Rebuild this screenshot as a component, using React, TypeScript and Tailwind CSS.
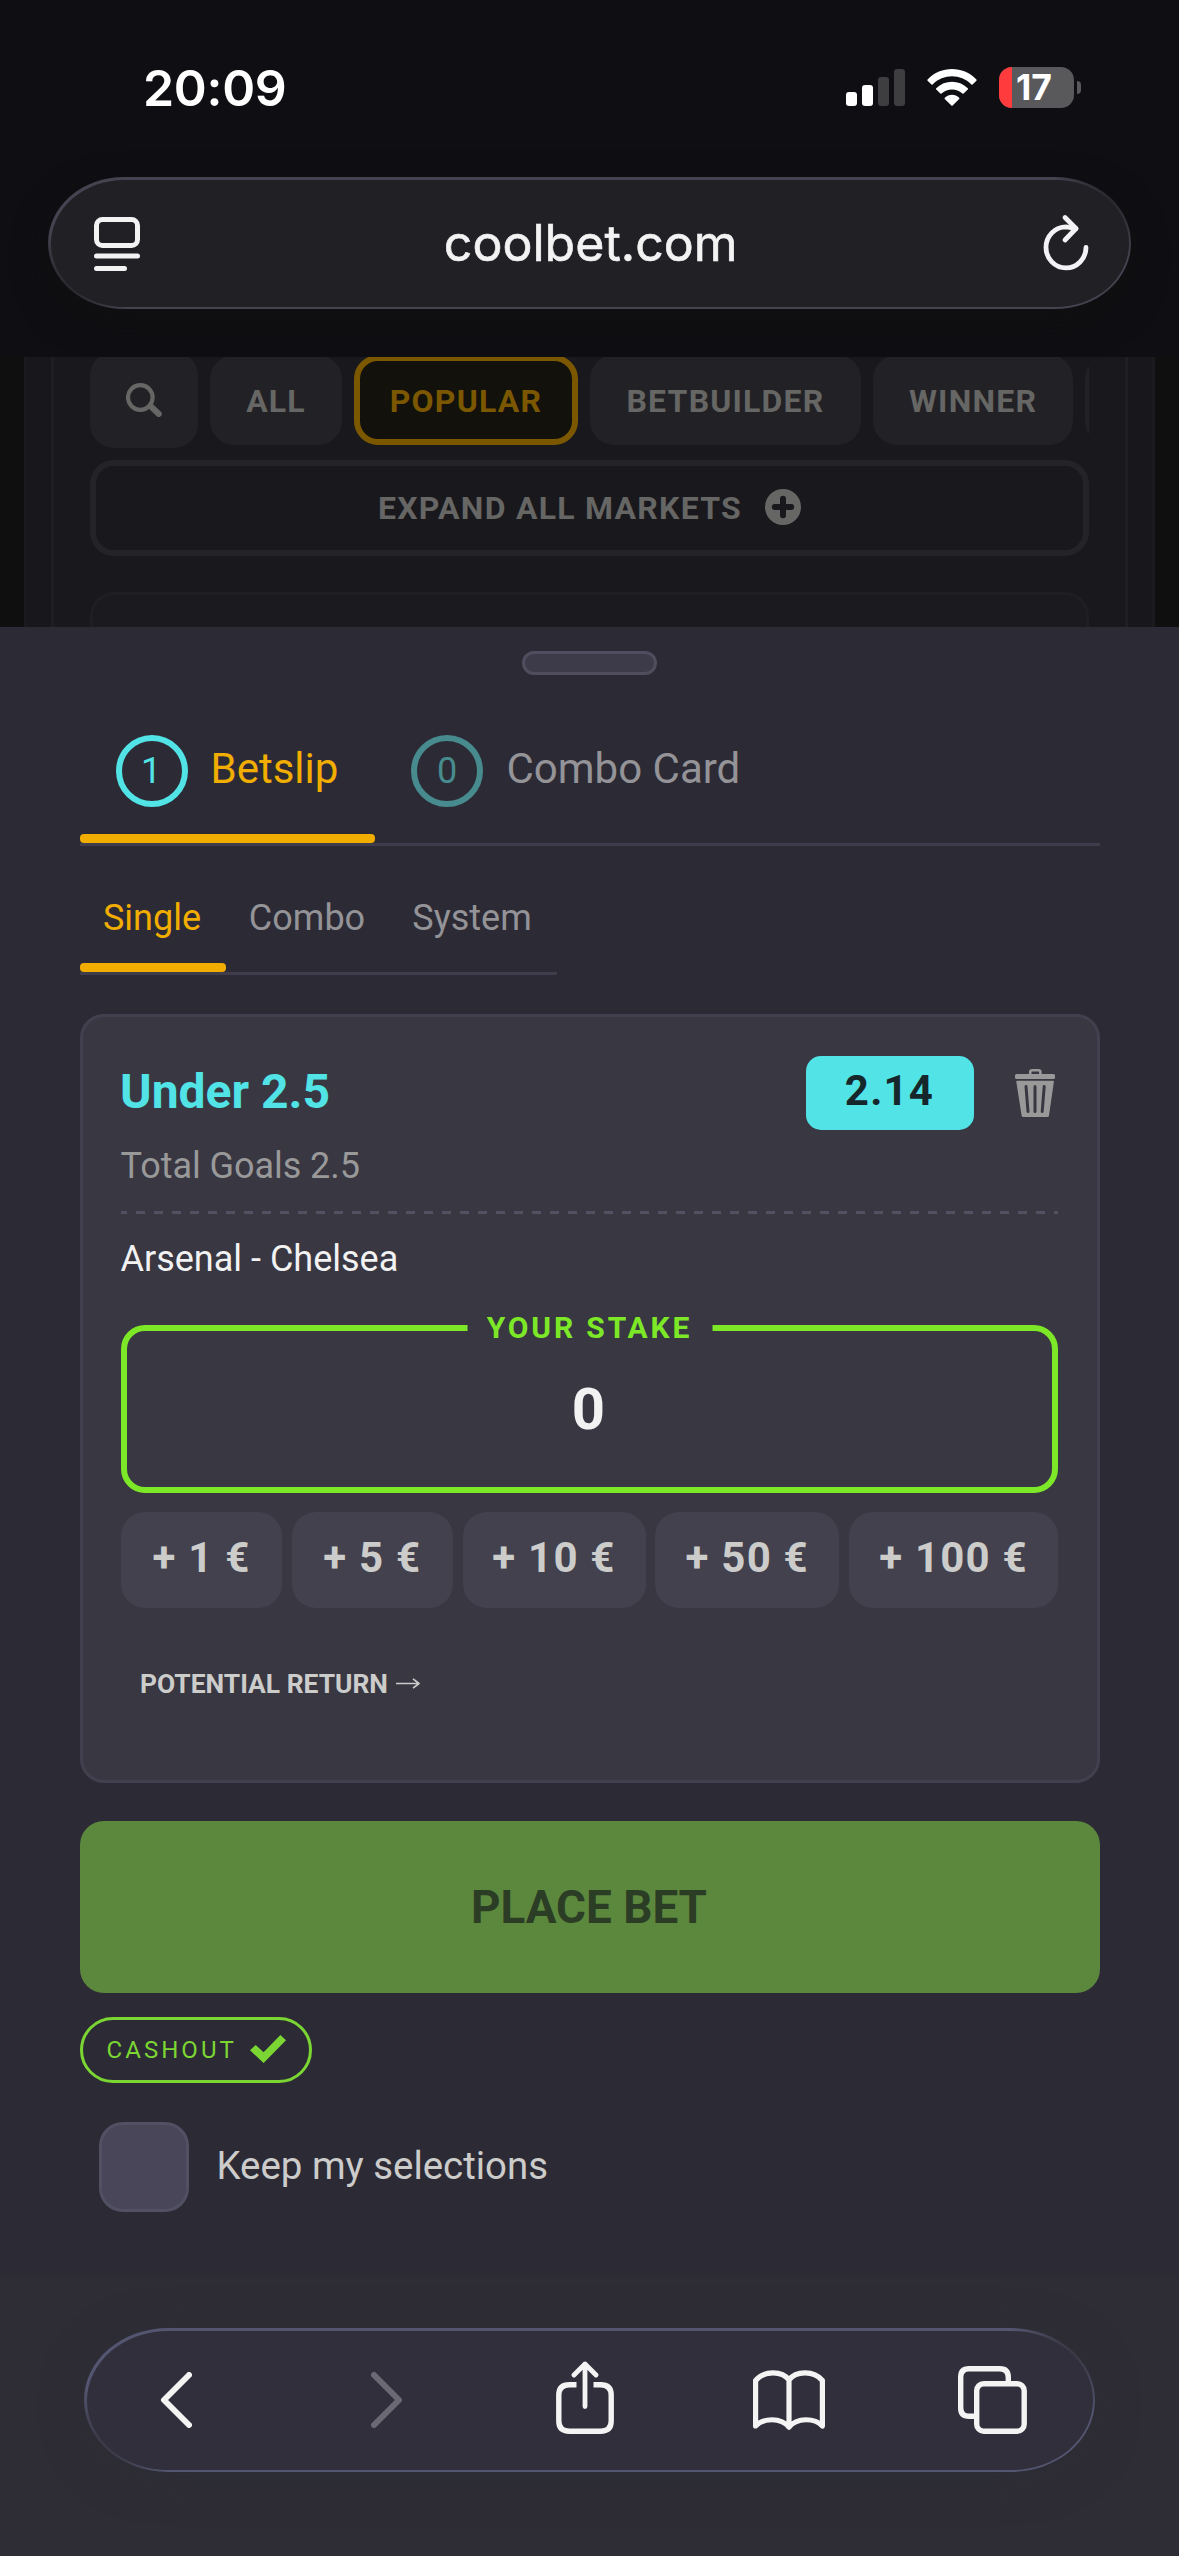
import React from "react";

const marketChips = [
  { label: "ALL", box: "w-[132px]" },
  { label: "POPULAR", box: "w-[224px]", active: true },
  { label: "BETBUILDER", box: "w-[271px]" },
  { label: "WINNER", box: "w-[200px]" },
  { label: "", box: "w-[200px]" },
];

const stakeChips = [
  { label: "+ 1 €", box: "w-[161px]" },
  { label: "+ 5 €", box: "w-[161px]" },
  { label: "+ 10 €", box: "w-[183px]" },
  { label: "+ 50 €", box: "w-[184px]" },
  { label: "+ 100 €", box: "w-[209px]" },
];

function WifiIcon() {
  return (
    <svg width="50" height="37" viewBox="0 0 50 37" fill="#fff">
      <path d="M.6 10.4C14-3.4 36-3.4 49.4 10.4Q50 11 49.4 11.8L45.5 15.6Q45 16 44.4 15.5C33.5 4.6 16.5 4.6 5.6 15.5Q5 16 4.5 15.6L.6 11.8Q0 11 .6 10.4Z" />
      <path d="M9.2 19.2C18 10.6 32 10.6 40.8 19.2Q41.3 19.8 40.8 20.4L36.6 24.6Q36 25 35.4 24.5C29.5 19.3 20.5 19.3 14.6 24.5Q14 25 13.4 24.6L9.2 20.4Q8.7 19.8 9.2 19.2Z" />
      <path d="M17.8 28.8C21.8 24.7 28.2 24.7 32.2 28.8Q32.8 29.4 32.2 30L25.6 36.6Q25 37 24.4 36.6L17.8 30Q17.2 29.4 17.8 28.8Z" />
    </svg>
  );
}

function StatusBar() {
  return (
    <div className="flex h-[177px] items-center justify-between pr-[98px] pl-[143px] font-[Inter,sans-serif]">
      <div className="mt-[-2px] text-[50px] leading-none font-semibold tracking-[-0.3px] text-white">20:09</div>
      <div className="mt-[-2px] flex items-center">
        <div className="flex h-[37px] items-end gap-[5.5px]">
          <div className="h-[14px] w-[10.5px] rounded-[3px] bg-white" />
          <div className="h-[21px] w-[10.5px] rounded-[3px] bg-white" />
          <div className="h-[29px] w-[10.5px] rounded-[3px] bg-[#3e3e41]" />
          <div className="h-[37px] w-[10.5px] rounded-[3px] bg-[#3e3e41]" />
        </div>
        <div className="ml-[22px]">
          <WifiIcon />
        </div>
        <div className="ml-[22.5px] flex h-[41px] w-[75px] items-center overflow-hidden rounded-[13px] bg-[#59595b]">
          <div className="h-full w-[13px] bg-[#ff3b3e]" />
          <div className="ml-[4px] text-[35.5px] leading-none font-bold text-white">17</div>
        </div>
        <div className="ml-[3px] h-[13px] w-[4px] rounded-r-full bg-[#59595b]" />
      </div>
    </div>
  );
}

function AddressBar() {
  return (
    <div className="mx-[48px] h-[132px] rounded-[76px/66px] bg-[#45434f] bg-[radial-gradient(circle_at_100%_0,#28272d_25px,transparent_80px),radial-gradient(circle_at_0_100%,#28272d_25px,transparent_80px)] p-[2.5px] font-[Inter,sans-serif] shadow-[0_14px_34px_rgba(17,17,17,0.6)]">
      <div className="flex h-full items-center justify-between rounded-[74px/64px] bg-[#212025] pr-[40px] pl-[43.5px]">
        <svg className="mt-[2px]" width="46" height="54" viewBox="0 0 46 54" fill="none" stroke="#f3f3f4" strokeWidth="5" strokeLinecap="round">
          <rect x="2.5" y="2.5" width="41" height="26" rx="6" />
          <path d="M2.5 39H43.5M2.5 51.5H30.5" />
        </svg>
        <div className="-translate-x-[0.5px] text-[50px] leading-none tracking-[0.03px] text-[#f3f3f4] [-webkit-text-stroke:0.6px_#f3f3f4]">
          coolbet.com
        </div>
        <svg className="mt-[-2px] overflow-visible" width="46" height="56" viewBox="0 0 46 56" fill="none" stroke="#f3f3f6" strokeWidth="4.8" strokeLinecap="round" strokeLinejoin="round">
          <path d="M43 33.5A20 20.5 0 1 1 23 12.9L33 14.5" />
          <path d="M22 3.5L33 14.5L22 26" />
        </svg>
      </div>
    </div>
  );
}

function MarketPage() {
  return (
    <div className="mt-[48px] h-[270px] overflow-hidden bg-[#0f0f10] px-[24px]">
      <div className="h-full border-x-[3px] border-[#1b1a1f] bg-[#18171b] px-[24px]">
        <div className="flow-root h-full border-x-[3px] border-[#1f1f22] bg-[#19181d] px-[36px]">
          <div className="mt-[-5px] flex h-[96px] items-center gap-3 overflow-hidden text-[32px] leading-none font-bold tracking-[1.2px] text-[#666664]">
            <div className="flex h-[96px] w-[108px] shrink-0 items-center justify-center rounded-[24px] bg-[#222126]">
              <svg width="36" height="34" viewBox="0 0 36 34" fill="none" stroke="#666664" strokeLinecap="round">
                <circle cx="14.3" cy="14.5" r="12.3" strokeWidth="4.2" />
                <path d="M25.5 24L32.8 31" strokeWidth="6" />
              </svg>
            </div>
            {marketChips.map((chip, i) => (
              <div
                key={i}
                className={`flex h-[90px] shrink-0 items-center justify-center rounded-[24px] pt-px ${chip.box} ${
                  chip.active ? "border-[6px] border-[#7b5800] bg-[#12110c] text-[#7b5800]" : "bg-[#222126]"
                }`}
              >
                {chip.label}
              </div>
            ))}
          </div>
          <div className="mt-3 flex h-[96px] items-center justify-center rounded-[24px] border-[6px] border-[#242328] text-[32px] leading-none font-bold tracking-[1.25px] text-[#666664]">
            EXPAND ALL MARKETS
            <svg className="mt-[-2px] ml-[23px]" width="36" height="36" viewBox="0 0 36 36">
              <circle cx="18" cy="18" r="18" fill="#666664" />
              <path d="M18 9.8V26.2M9.8 18H26.2" stroke="#19181d" strokeWidth="6" strokeLinecap="round" />
            </svg>
          </div>
          <div className="mt-9 h-[120px] rounded-[24px] border-[3px] border-[#1f1f23] bg-[#1b1a1e]" />
        </div>
      </div>
    </div>
  );
}

function SheetTabs() {
  return (
    <>
      <div className="mt-[42px] flex h-[129px] items-start border-b-[3px] border-[#3f3d4b] text-[42px] leading-[72px]">
        <div className="flex h-[126px] w-[295px] flex-col">
          <div className="flex flex-1 items-start pt-[18px] pl-[36px]">
            <div className="flex size-[72px] items-center justify-center rounded-full border-[6px] border-[#51e3e6] text-[36px] leading-none text-[#51e3e6]">
              <span className="-translate-x-px">1</span>
            </div>
            <div className="mt-[-2.5px] ml-[22.5px] text-[#f2ae00]">Betslip</div>
          </div>
          <div className="h-[9px] rounded-[4px] bg-[#f2ae00]" />
        </div>
        <div className="flex pt-[18px] pl-[36px]">
          <div className="flex size-[72px] items-center justify-center rounded-full border-[6px] border-[#488b8f] text-[36px] leading-none text-[#488b8f]">
            0
          </div>
          <div className="mt-[-2.5px] ml-[23.5px] text-[#949397]">Combo Card</div>
        </div>
      </div>
      <div className="mt-[45px] flex h-[84px] w-[477px] border-b-[3px] border-[#3f3d4b] text-center text-[36px] leading-[54px] text-[#949397]">
        <div className="flex w-[146px] flex-col justify-between text-[#f2ae00]">
          <div className="pr-[2px]">Single</div>
          <div className="h-[9px] rounded-[4px] bg-[#f2ae00]" />
        </div>
        <div className="w-[164px] pr-[2px]">Combo</div>
        <div className="w-[167px] pr-[3px]">System</div>
      </div>
    </>
  );
}

function TrashIcon() {
  return (
    <svg width="40" height="48" viewBox="0 0 40 48">
      <path d="M15.2 6V3.2Q15.2 1.3 17.2 1.3H23.4Q25.4 1.3 25.4 3.2V6" fill="none" stroke="#999" strokeWidth="2.6" />
      <rect x="0" y="5" width="40" height="5" rx="1.5" fill="#999" />
      <path d="M2 11.8H38.2Q39 11.8 38.9 12.8L34 46.5Q33.8 48 32.4 48H8.2Q6.8 48 6.6 46.5L1.3 12.8Q1.1 11.8 2 11.8Z" fill="#999" />
      <path d="M11 17.5L13 42.5M20 17.5V42.5M29.2 17.5L27.2 42.5" stroke="#383742" strokeWidth="3" strokeLinecap="round" />
    </svg>
  );
}

function BetCard() {
  return (
    <div className="mt-[39px] h-[769px] rounded-[24px] border-[3px] border-[#42404e] bg-[#383742] pt-[39px] pr-[39px] pl-[38px]">
      <div className="flex h-[74px] items-center">
        <div className="mt-[-3px] -ml-px text-[48px] leading-none font-bold text-[#51e3e6]">Under 2.5</div>
        <div className="ml-auto h-[74px] w-[168px] rounded-[15px] bg-[#51e3e6] pr-px text-center text-[42px] leading-[69px] font-bold tracking-[1.2px] text-[#15272b]">
          2.14
        </div>
        <div className="mr-[3px] ml-[41px]">
          <TrashIcon />
        </div>
      </div>
      <div className="mt-3 -ml-[0.5px] text-[36px] leading-[48px] tracking-[-0.05px] text-[#999]">Total Goals 2.5</div>
      <div className="mt-[21px] h-[3px] bg-[repeating-linear-gradient(90deg,#535161_0_9px,transparent_9px_18px)] bg-[position:-3px_0]" />
      <div className="mt-[21px] -ml-[0.5px] text-[36px] leading-[48px] text-[#f2f2f2]">Arsenal - Chelsea</div>
      <div className="relative mt-[42px] flex h-[168px] items-center justify-center rounded-[24px] border-[6px] border-[#7de827]">
        <div className="absolute top-[-21px] left-1/2 w-[245px] -translate-x-1/2 bg-[#383742] text-center text-[30px] leading-[36px] font-bold tracking-[2.85px] text-[#7de827]">
          YOUR STAKE
        </div>
        <div className="-translate-x-px text-[58px] leading-none font-bold text-[#f2f2f2]">0</div>
      </div>
      <div className="mt-[19px] flex justify-between text-center text-[42px] leading-[92px] font-bold tracking-[1.2px] text-[#cccccb]">
        {stakeChips.map((chip) => (
          <div key={chip.label} className={`h-[96px] rounded-[24px] bg-[#42414d] ${chip.box}`}>
            {chip.label}
          </div>
        ))}
      </div>
      <div className="mt-[56px] ml-[19px] flex h-10 items-center text-[26.4px] leading-none font-bold text-[#cccccb]">
        POTENTIAL RETURN
        <svg className="ml-[8px]" width="24" height="12" viewBox="0 0 24 12" fill="none" stroke="#cccccb" strokeWidth="1.6" strokeLinejoin="round">
          <path d="M0 5.5H23M17 .8L23 5.5L17 10.2" />
        </svg>
      </div>
    </div>
  );
}

function BottomBar() {
  const stroke = { fill: "none", stroke: "#f4f4f4", strokeLinecap: "round", strokeLinejoin: "round" } as const;
  return (
    <div className="mt-[116px] ml-[4px] h-[144px] w-[1011px] rounded-[84px/72px] bg-[#545571] bg-[radial-gradient(circle_at_100%_0,#393743_28px,transparent_85px),radial-gradient(circle_at_0_100%,#393743_28px,transparent_85px)] p-[2.5px] shadow-[0_6px_40px_rgba(45,45,52,0.9)]">
      <div className="flex h-full items-center rounded-[82px/70px] bg-[#302f3b] pl-[73.5px]">
        <svg width="32" height="56" viewBox="0 0 32 56" {...stroke} strokeWidth="6">
          <path d="M29 3L4 28L29 53" />
        </svg>
        <svg className="ml-[179px]" width="32" height="56" viewBox="0 0 32 56" {...stroke} stroke="#6a6974" strokeWidth="6">
          <path d="M3 3L28 28L3 53" />
        </svg>
        <svg className="mt-[-5px] ml-[153px]" width="58" height="73" viewBox="0 0 58 73" {...stroke} strokeWidth="5.4">
          <path strokeLinecap="butt" d="M20.5 23.7H13.5Q2.8 23.7 2.8 34V60Q2.8 70.2 13.5 70.2H44.5Q55.2 70.2 55.2 60V34Q55.2 23.7 44.5 23.7H37.5" />
          <path d="M29 45.5V3M18 14L29 3L40 14" strokeWidth="4.8" />
        </svg>
        <svg className="ml-[139px]" width="72" height="60" viewBox="0 0 72 60" {...stroke} strokeWidth="5.2">
          <path d="M36 10C29 .5 11 .5 2.6 10.5V56C10 48 28 47 36 57.2C44 47 62 48 69.4 56V10.5C61 .5 43 .5 36 10ZM36 10V57" />
        </svg>
        <svg className="ml-[133px]" width="69" height="68" viewBox="0 0 69 68" {...stroke} strokeWidth="5.4">
          <path strokeLinecap="butt" d="M50.3 15.5V11.5Q50.3 2.7 42 2.7H11Q2.7 2.7 2.7 11V42Q2.7 50.3 11 50.3H16" />
          <rect x="18.7" y="17.7" width="47.5" height="47.5" rx="7" />
        </svg>
      </div>
    </div>
  );
}

export default function App() {
  return (
    <div className="h-[2556px] w-[1179px] overflow-hidden bg-[#0f0e12] font-[Roboto,sans-serif]">
      <StatusBar />
      <AddressBar />
      <MarketPage />
      <div className="h-[1929px] bg-[#2c2b35] bg-[linear-gradient(#2c2b35_1640px,#2e2d36_1655px)] pr-[79px] pl-[80px]">
        <div className="flex justify-center pt-6 pr-[2px]">
          <div className="h-6 w-[135px] rounded-full border-[3px] border-[#4f4d5e] bg-[#3d3b49]" />
        </div>
        <SheetTabs />
        <BetCard />
        <div className="mt-[38px] h-[172px] rounded-[24px] bg-[#5c883e] pr-[2px] text-center text-[45.8px] leading-[174px] font-bold text-[#2b3d25]">
          PLACE BET
        </div>
        <div className="mt-6 flex h-[66px] w-[232px] items-center rounded-full border-[3px] border-[#7bd633] pl-[23.5px] text-[24px] leading-none tracking-[3.05px] text-[#7bd633]">
          CASHOUT
          <svg className="mt-[-3px] ml-[13px]" width="36" height="28" viewBox="0 0 36 28" fill="#7bd633">
            <path d="M0 15.3L5.7 10L13.6 17.3L30.4 0L36 5.3L13.6 28Z" />
          </svg>
        </div>
        <div className="mt-[39px] ml-[19px] flex items-center">
          <div className="size-[90px] rounded-[24px] border-[3px] border-[#525063] bg-[#484658]" />
          <div className="mt-[-1px] ml-[27.5px] text-[38.4px] leading-none text-[#cccccb]">Keep my selections</div>
        </div>
        <BottomBar />
      </div>
    </div>
  );
}
